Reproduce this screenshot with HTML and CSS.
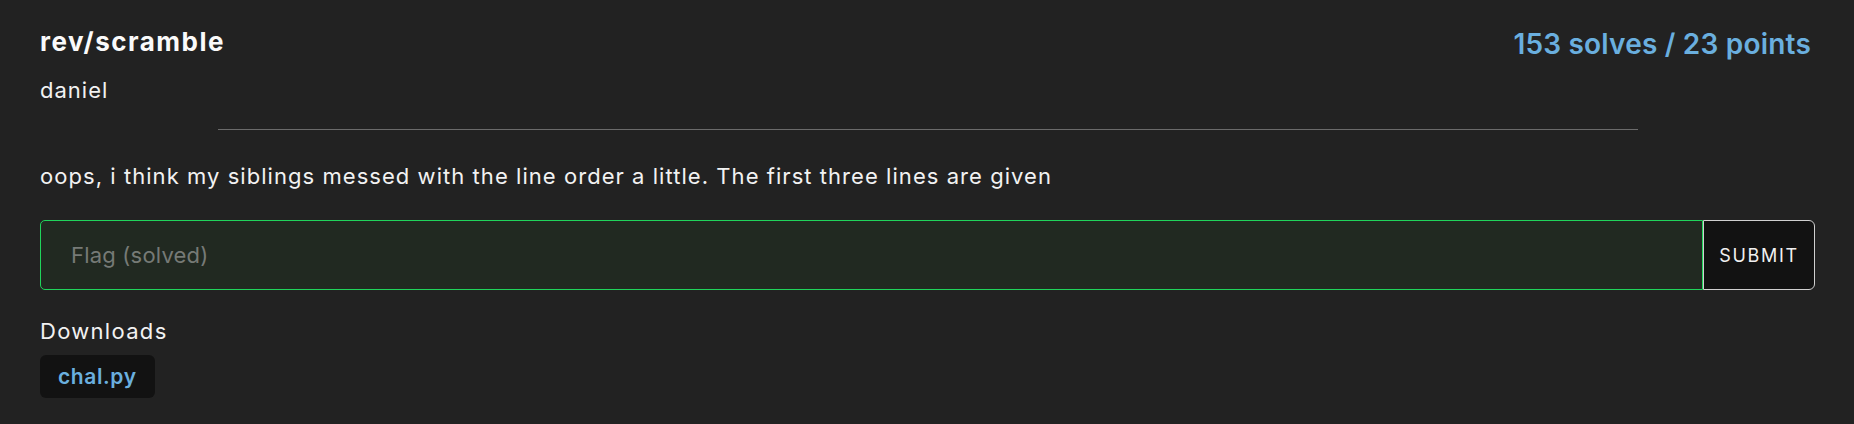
FILE: index.html
```html
<!DOCTYPE html>
<html lang="en">
<head>
<meta charset="utf-8">
<title>rev/scramble</title>
<link rel="stylesheet" href="styles.css">
</head>
<body>
<div class="card">
  <div class="head">
    <div class="left">
      <h1 class="title">rev/scramble</h1>
      <div class="author">daniel</div>
    </div>
    <div class="stats">153 solves / 23 points</div>
  </div>
  <hr class="rule">
  <p class="desc">oops, i think my siblings messed with the line order a little. The first three lines are given</p>
  <form class="flag">
    <input class="flag-input" type="text" placeholder="Flag (solved)">
    <button class="submit" type="button">SUBMIT</button>
  </form>
  <div class="downloads">
    <div class="dl-label">Downloads</div>
    <a class="file" href="#">chal.py</a>
  </div>
</div>
</body>
</html>
```

FILE: styles.css
```css
html, body {
  margin: 0;
  padding: 0;
  background: #222222;
  height: 100%;
}
body {
  font-family: Inter, "Noto Sans", "Liberation Sans", sans-serif;
  color: #f2f2f2;
}
.card {
  padding: 27px 39px 0 40px;
}
.head {
  display: flex;
  justify-content: space-between;
  align-items: flex-start;
}
.title {
  margin: 0;
  font-size: 26px;
  font-weight: 700;
  line-height: 30px;
  letter-spacing: 1.5px;
  color: #fafafa;
}
.author {
  margin-top: 20px;
  font-size: 22px;
  line-height: 26px;
  letter-spacing: 1px;
}
.stats {
  margin-top: 1px;
  margin-right: 4px;
  font-size: 28px;
  font-weight: 600;
  line-height: 32px;
  letter-spacing: 0.2px;
  color: #6aafdf;
}
.rule {
  width: 80%;
  margin: 26px auto 0;
  border: 0;
  border-top: 1px solid #6b6b6b;
  height: 0;
}
.desc {
  margin: 33px 0 0;
  font-size: 22px;
  line-height: 26px;
  letter-spacing: 1.05px;
}
.flag {
  display: flex;
  margin-top: 31px;
  height: 70px;
}
.flag-input {
  flex: 1;
  min-width: 0;
  box-sizing: border-box;
  height: 70px;
  margin: 0;
  padding: 0 30px;
  background: #212921;
  border: 1px solid #20d35b;
  border-radius: 5px 0 0 5px;
  color: #eee;
  font-family: inherit;
  font-size: 22px;
  letter-spacing: 0.2px;
  outline: none;
}
.flag-input::placeholder {
  color: #767a76;
}
.submit {
  box-sizing: border-box;
  width: 112px;
  height: 70px;
  margin: 0;
  padding: 0;
  background: #121212;
  border: 1px solid #d0d0d0;
  border-radius: 0 6px 6px 0;
  color: #f0f0f0;
  font-family: inherit;
  font-size: 18px;
  letter-spacing: 1.7px;
}
.downloads {
  margin-top: 28px;
}
.dl-label {
  font-size: 22px;
  line-height: 26px;
  letter-spacing: 1.3px;
}
.file {
  display: inline-block;
  margin-top: 11px;
  padding: 0 18px;
  height: 43px;
  line-height: 43px;
  background: #121212;
  border-radius: 6px;
  color: #6aafdf;
  font-size: 21px;
  font-weight: 600;
  letter-spacing: 0.6px;
  text-decoration: none;
}
```
